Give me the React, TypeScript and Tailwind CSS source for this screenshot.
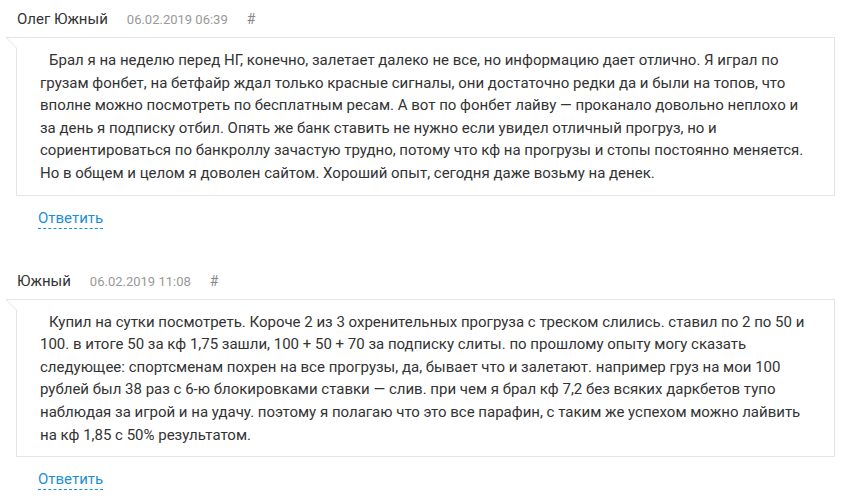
import React from 'react'

interface Comment {
  id: number
  author: string
  date: string
  text: string
}

const comments: Comment[] = [
  {
    id: 1,
    author: 'Олег Южный',
    date: '06.02.2019 06:39',
    text:
      'Брал я на неделю перед НГ, конечно, залетает далеко не все, но информацию дает отлично. Я играл по грузам фонбет, на бетфайр ждал только красные сигналы, они достаточно редки да и были на топов, что вполне можно посмотреть по бесплатным ресам. А вот по фонбет лайву — проканало довольно неплохо и за день я подписку отбил. Опять же банк ставить не нужно если увидел отличный прогруз, но и сориентироваться по банкроллу зачастую трудно, потому что кф на прогрузы и стопы постоянно меняется. Но в общем и целом я доволен сайтом. Хороший опыт, сегодня даже возьму на денек.',
  },
  {
    id: 2,
    author: 'Южный',
    date: '06.02.2019 11:08',
    text:
      'Купил на сутки посмотреть. Короче 2 из 3 охренительных прогруза с треском слились. ставил по 2 по 50 и 100. в итоге 50 за кф 1,75 зашли, 100 + 50 + 70 за подписку слиты. по прошлому опыту могу сказать следующее: спортсменам похрен на все прогрузы, да, бывает что и залетают. например груз на мои 100 рублей был 38 раз с 6-ю блокировками ставки — слив. при чем я брал кф 7,2 без всяких даркбетов тупо наблюдая за игрой и на удачу. поэтому я полагаю что это все парафин, с таким же успехом можно лайвить на кф 1,85 с 50% результатом.',
  },
]

function CommentItem({ comment }: { comment: Comment }) {
  return (
    <div className="pb-[32px]">
      {/* author line */}
      <div className="flex items-baseline h-[37px] pt-[8px] pl-[17px]">
        <span className="text-[15px] text-[#333]">{comment.author}</span>
        <span className="ml-[19px] text-[13px] text-[#999]">{comment.date}</span>
        <span className="ml-[19px] text-[14px] text-[#888]">#</span>
      </div>

      {/* bubble with a small tail on the top-left corner */}
      <div className="relative ml-[16px] mr-[12px] border border-[#e4e5ec] bg-white pl-[23px] pr-[20px] pt-[11px] pb-[10px]">
        <svg
          className="absolute left-[-12px] top-[-1px]"
          width="13"
          height="13"
          viewBox="0 0 13 13"
        >
          <polygon points="0,0 13,0 13,13" fill="#fff" />
          <path d="M13 0.5 H1 L12.5 12" fill="none" stroke="#e4e5ec" strokeWidth="1" />
        </svg>
        <p className="indent-[9px] text-[15px] leading-[22.6px] text-[#333]">{comment.text}</p>
      </div>

      <div className="pl-[38px] pt-[10px]">
        <a className="text-[15px] text-[#1c8fd6] border-b border-dashed border-[#1c8fd6] pb-[1px] cursor-pointer">
          Ответить
        </a>
      </div>
    </div>
  )
}

export default function App() {
  return (
    <div className="w-[847px] bg-white" style={{ fontFamily: 'Roboto, sans-serif' }}>
      {comments.map((c) => (
        <CommentItem key={c.id} comment={c} />
      ))}
    </div>
  )
}
